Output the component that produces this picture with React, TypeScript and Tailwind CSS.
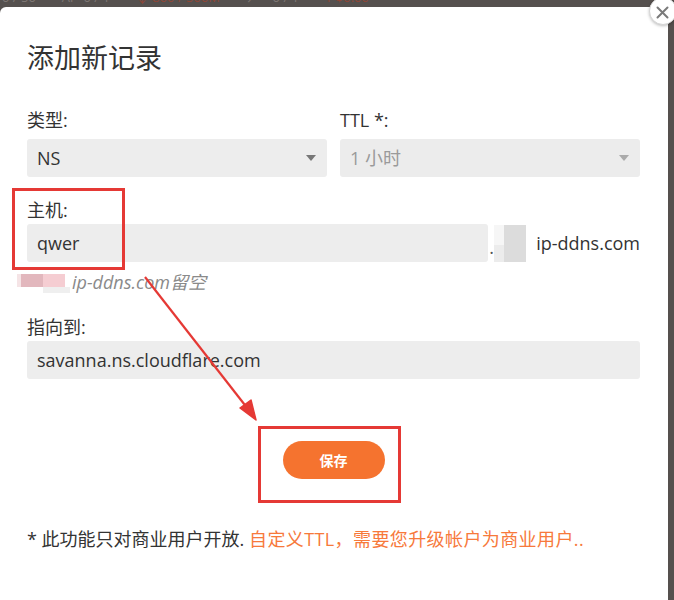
import React from "react";

function Caret({ light }: { light?: boolean }) {
  return (
    <svg width="10" height="6" viewBox="0 0 10 6" className="shrink-0">
      <path d="M0 0 L10 0 L5 6 Z" fill={light ? "#aaaaaa" : "#777777"} />
    </svg>
  );
}

export default function App() {
  return (
    <div className="relative h-[600px] w-[674px] overflow-hidden bg-[#55504e] font-['Open_Sans','Noto_Sans_CJK_SC',sans-serif] text-[#333333]">
      {/* top bar remnants */}
      <div className="h-[7px] overflow-hidden">
        <div className="-mt-[11px] flex gap-[26px] whitespace-nowrap pl-[2px] text-[13px] leading-[16px] text-[#7d7673]">
          <span>0 / 50</span>
          <span>Al&nbsp;&nbsp; 0 / 1</span>
          <span className="text-[#8e4636]">↓ 800 / 500M</span>
          <span>↗&nbsp;&nbsp;&nbsp; 0 / 1</span>
          <span className="text-[#8e4636]">¥ $0.00</span>
        </div>
      </div>

      <div className="flex h-[593px]">
        <div className="relative flex-1 rounded-tl-[6px] bg-white pl-[27px] pr-[28px] pt-[33px]">
          <h1 className="text-[27px] font-normal leading-[36px] text-[#333333]">添加新记录</h1>

          <div className="mt-[32px] grid grid-cols-2 gap-x-[13px]">
            <div>
              <div className="text-[18px] leading-[24px]">类型:</div>
              <div className="mt-[7px] flex h-[38px] items-center justify-between rounded-[3px] bg-[#ededed] pl-[10px] pr-[11px] text-[18px]">
                <span>NS</span>
                <Caret />
              </div>
            </div>
            <div>
              <div className="text-[18px] leading-[24px]">TTL *:</div>
              <div className="mt-[7px] flex h-[38px] items-center justify-between rounded-[3px] bg-[#ececec] pl-[10px] pr-[11px] text-[18px] text-[#9a9a9a]">
                <span>1 小时</span>
                <Caret light />
              </div>
            </div>
          </div>

          <div className="mt-[21px] text-[18px] leading-[24px]">主机:</div>
          <div className="mt-[2px] flex h-[38px] items-center">
            <div className="flex h-[38px] flex-1 items-center rounded-[3px] bg-[#ededed] pl-[10px] text-[18px]">
              qwer
            </div>
            <span className="w-[6px] self-end pb-[6px] pl-[1px] text-[18px] leading-[18px] text-[#555]">.</span>
            <svg width="32" height="37" viewBox="0 0 32 37" className="shrink-0">
              <rect x="0" y="0" width="10" height="20" fill="#f6f6f6" />
              <rect x="0" y="20" width="10" height="17" fill="#ececec" />
              <rect x="10" y="0" width="22" height="37" fill="#dcdcdc" />
            </svg>
            <span className="ml-[10px] text-[18px] text-[#333333]">ip-ddns.com</span>
          </div>

          <div className="-ml-[10px] mt-[8px] flex h-[24px] items-center gap-[2px]">
            <svg width="53" height="24" viewBox="0 0 53 24" className="shrink-0">
              <rect x="0" y="4" width="4" height="13" fill="#f5e4e6" />
              <rect x="4" y="4" width="22" height="13" fill="#e2b7bd" />
              <rect x="26" y="4" width="22" height="13" fill="#f5cdd2" />
              <rect x="26" y="17" width="27" height="6" fill="#efefef" />
            </svg>
            <span className="text-[18px] italic leading-[24px] text-[#8a8a8a]">ip-ddns.com留空</span>
          </div>

          <div className="mt-[21px] text-[18px] leading-[24px]">指向到:</div>
          <div className="mt-[2px] flex h-[38px] items-center rounded-[3px] bg-[#ededed] pl-[10px] text-[18px]">
            savanna.ns.cloudflare.com
          </div>

          <div className="mt-[62px] flex justify-center">
            <button className="flex h-[38px] w-[102px] items-center justify-center rounded-full bg-[#f5732f] text-[14px] font-bold text-white">
              保存
            </button>
          </div>

          <p className="mt-[48px] whitespace-nowrap text-[18px] leading-[24px]">
            <span className="text-[#333333]">* 此功能只对商业用户开放. </span>
            <span className="tracking-[0.4px] text-[#f7793b]">自定义TTL，需要您升级帐户为商业用户..</span>
          </p>

          {/* annotations */}
          <div className="pointer-events-none absolute left-[12px] top-[181px] h-[82px] w-[113px] border-[3px] border-[#e53935]" />
          <div className="pointer-events-none absolute left-[258px] top-[419px] h-[77px] w-[143px] border-[3px] border-[#e53935]" />
          <svg className="pointer-events-none absolute left-0 top-0" width="668" height="593" viewBox="0 0 668 593">
            <line x1="145" y1="270" x2="248" y2="402" stroke="#e53935" strokeWidth="2.2" />
            <path d="M256 413 L240 401 L251 393 Z" fill="#e53935" stroke="#e53935" strokeWidth="1.5" strokeLinejoin="round" />
          </svg>
        </div>
        <div className="w-[6px]" />
      </div>

      {/* close button */}
      <div className="absolute left-[649px] top-[-3px] flex h-[28px] w-[28px] items-center justify-center rounded-full border border-[#d6d6d6] bg-white shadow-[0_1px_3px_rgba(0,0,0,0.25)]">
        <svg width="13" height="13" viewBox="0 0 13 13" className="ml-[-1px] mt-[3px]">
          <path d="M1.5 1.5 L11.5 11.5 M11.5 1.5 L1.5 11.5" stroke="#7a7a7a" strokeWidth="2" strokeLinecap="round" />
        </svg>
      </div>
    </div>
  );
}
